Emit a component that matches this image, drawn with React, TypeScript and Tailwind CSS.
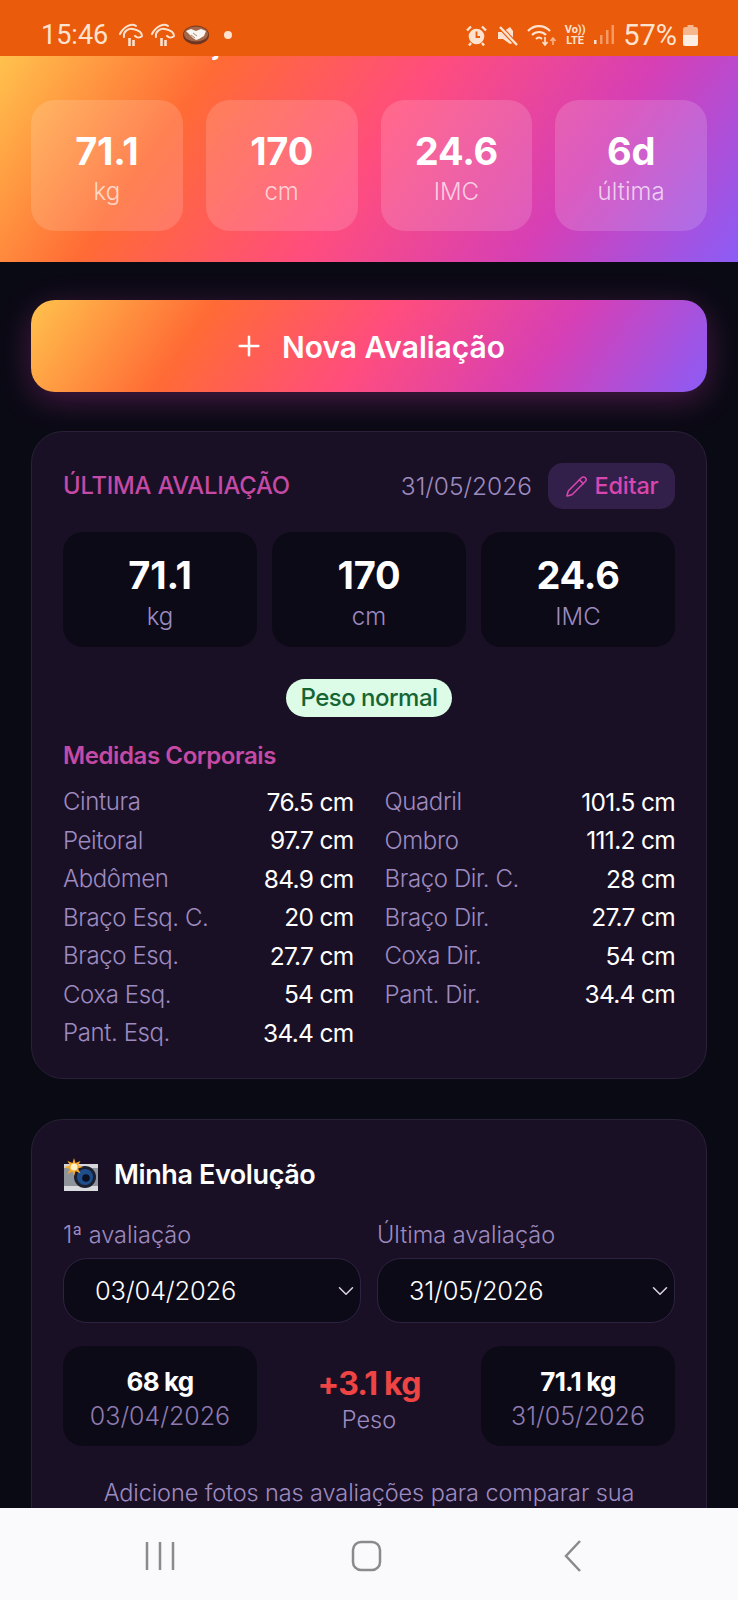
import { ChevronDown, Pencil, Plus } from "lucide-react";

const gradient =
  "bg-[linear-gradient(125deg,#ffc24d_0%,#ff6b35_25%,#ff4d7d_50%,#d63fb5_75%,#8b5cf6_100%)]";

const medidas = [
  ["Cintura", "76.5 cm", "Quadril", "101.5 cm"],
  ["Peitoral", "97.7 cm", "Ombro", "111.2 cm"],
  ["Abdômen", "84.9 cm", "Braço Dir. C.", "28 cm"],
  ["Braço Esq. C.", "20 cm", "Braço Dir.", "27.7 cm"],
  ["Braço Esq.", "27.7 cm", "Coxa Dir.", "54 cm"],
  ["Coxa Esq.", "54 cm", "Pant. Dir.", "34.4 cm"],
  ["Pant. Esq.", "34.4 cm", "", ""],
];

function TreeIcon() {
  return (
    <svg width="26" height="25" viewBox="0 0 26 25" fill="none" stroke="#fde3cf" strokeWidth="2">
      <path d="M2 11 C6 3 14 0 18 3" strokeLinecap="round" />
      <path d="M6 14 C5 8 11 5 15 6 C20 7 24 9 24 13 C22 15 19 15 17 13" strokeLinecap="round" />
      <path d="M11.500 15v8M15.500 17v6" strokeWidth="2.600" />
    </svg>
  );
}

function Handshake() {
  return (
    <svg width="26" height="20" viewBox="0 0 26 20">
      <ellipse cx="13" cy="10" rx="13" ry="9.500" fill="#6f3520" />
      <ellipse cx="13" cy="9" rx="12" ry="7.500" fill="#a3674a" />
      <path d="M3 6l5-2 5 2 5-2 5 2-2 5-5 3-3 1-3-2-3-3z" fill="#f8f4f2" />
      <path d="M10 8l4 3M8 10l4 3" stroke="#a3674a" strokeWidth="0.800" />
    </svg>
  );
}

function AlarmIcon() {
  return (
    <svg width="21" height="21" viewBox="0 0 21 21" fill="none">
      <circle cx="10.500" cy="11.500" r="7.800" fill="#fde3cf" />
      <path d="M10.500 6.500v5.500h3.500" stroke="#ea5b0c" strokeWidth="1.800" />
      <path d="M1 5.500 5 1.500M20 5.500l-4-4M5 18l-2 2.500M16 18l2 2.500" stroke="#fde3cf" strokeWidth="2.400" />
    </svg>
  );
}

function MuteIcon() {
  return (
    <svg width="22" height="21" viewBox="0 0 22 21" fill="none">
      <path d="M1 7h5l7-5 3 4v12l-3 1-7-5H1z" fill="#fde3cf" />
      <path d="M2 1l18 19" stroke="#ea5b0c" strokeWidth="4.500" />
      <path d="M3 2l17 18" stroke="#fde3cf" strokeWidth="2.400" />
    </svg>
  );
}

function WifiIcon() {
  return (
    <svg width="30" height="24" viewBox="0 0 30 24" fill="none" stroke="#fde3cf" strokeWidth="2.100">
      <path d="M1 8c6-6.500 16-6.500 22 0" />
      <path d="M5 12c4-4 10-4 14 0" />
      <path d="M9 16c2-2 4-2 6 0" />
      <path d="M18 14v8M15.500 19l2.500 3 2.500-3" strokeWidth="1.600" />
      <path d="M26 22v-7M23.500 18l2.500-3 2.500 3" strokeWidth="1.600" stroke="#f7b48c" />
    </svg>
  );
}

function SignalIcon() {
  return (
    <svg width="20" height="20" viewBox="0 0 20 20" fill="#f49a64">
      <rect x="0" y="15" width="2.500" height="4" fill="#fde3cf" />
      <rect x="6" y="10" width="2.500" height="9" />
      <rect x="12" y="5" width="2.500" height="14" />
      <rect x="17.500" y="0" width="2.500" height="19" />
    </svg>
  );
}

function BatteryIcon() {
  return (
    <svg width="15" height="21" viewBox="0 0 15 21">
      <rect x="4.500" y="0" width="6" height="3" fill="#f6b78f" />
      <rect x="0" y="2" width="15" height="19" rx="2.500" fill="#f6b78f" />
      <path d="M0 10h15v8.500a2.500 2.500 0 0 1-2.500 2.500h-10A2.500 2.500 0 0 1 0 18.500z" fill="#fdeee3" />
    </svg>
  );
}

function CameraFlash() {
  return (
    <svg width="36" height="34" viewBox="0 0 36 34">
      <rect x="1" y="6" width="34" height="27" rx="1.500" fill="#8f949b" />
      <rect x="1" y="28" width="34" height="5" fill="#d9dbde" />
      <rect x="1" y="6" width="34" height="4" fill="#d5d7da" />
      <circle cx="22" cy="19" r="11" fill="#1a2030" />
      <circle cx="22" cy="19" r="8" fill="#1f4e8c" />
      <circle cx="23" cy="20" r="3.800" fill="#0a1020" />
      <path d="M11 0l1.500 5 5-2-2.500 4.500 5 1.500-5 1.500 2.500 5-5-2.500L11 18l-1.500-4.500L4.500 16 7 11 1 9l6-1.500L4.500 3l5 2z" fill="#f9a825" />
      <circle cx="11" cy="9" r="3.500" fill="#fff3c4" />
    </svg>
  );
}

function Stat({ value, label }: { value: string; label: string }) {
  return (
    <div className="flex h-[131px] flex-col items-center justify-center rounded-[24px] bg-white/15 pt-[4px]">
      <span className="text-[38px] leading-[46px] font-bold tracking-[-0.2px] text-white">{value}</span>
      <span className="mt-[3px] text-[24px] leading-[30px] font-light text-white/70">{label}</span>
    </div>
  );
}

function InnerStat({ value, label }: { value: string; label: string }) {
  return (
    <div className="flex h-[115px] flex-col items-center justify-center rounded-[20px] bg-[#0d0a18] pt-[5px]">
      <span className="text-[38px] leading-[46px] font-bold tracking-[-0.2px] text-white">{value}</span>
      <span className="mt-[4px] text-[24px] leading-[30px] font-light text-[#9d8bc0]">{label}</span>
    </div>
  );
}

function SelectBox({ value }: { value: string }) {
  return (
    <div className="flex h-[65px] items-center justify-between rounded-[24px] border border-[#2d2340] bg-[#0d0a18] pr-[1px] pl-[31px]">
      <span className="pt-[2px] text-[25.5px] font-light tracking-[-0.2px] text-white">{value}</span>
      <ChevronDown size={26} color="#d8d2e4" strokeWidth={1.4} />
    </div>
  );
}

function Compare({ value, date }: { value: string; date: string }) {
  return (
    <div className="flex h-[100px] flex-col items-center justify-center rounded-[20px] bg-[#0d0a18] pt-[6px]">
      <span className="text-[26px] leading-[34px] font-bold tracking-[-0.8px] text-white">{value}</span>
      <span className="text-[25px] leading-[34px] font-light text-[#8d7ab0]">{date}</span>
    </div>
  );
}

export default function App() {
  return (
    <div className="flex h-[1600px] w-[738px] flex-col overflow-hidden bg-[#0a0a14] font-['Inter',sans-serif]">
      {/* barra de status */}
      <div className="flex h-[56px] shrink-0 items-center justify-between bg-[#ea5b0c] pt-[14px] pr-[40px] pl-[41px] font-['Roboto',sans-serif] text-[#fde3cf]">
        <div className="flex items-center">
          <span className="mr-[10px] text-[27px] leading-none">15:46</span>
          <TreeIcon />
          <span className="ml-[6px]"><TreeIcon /></span>
          <span className="ml-[7px]"><Handshake /></span>
          <span className="ml-[15px] h-[8px] w-[8px] rounded-full bg-[#fde3cf]" />
        </div>
        <div className="flex items-center">
          <AlarmIcon />
          <span className="ml-[10px]"><MuteIcon /></span>
          <span className="ml-[8px]"><WifiIcon /></span>
          <div className="ml-[6px] flex w-[24px] flex-col items-center text-[11px] leading-[11px] font-bold">
            <span>Vo))</span>
            <span>LTE</span>
          </div>
          <span className="ml-[7px]"><SignalIcon /></span>
          <span className="ml-[9px] text-[29px] leading-none">57%</span>
          <span className="ml-[6px]"><BatteryIcon /></span>
        </div>
      </div>

      <div className="min-h-0 flex-1 overflow-hidden">
        {/* header */}
        <div className={`${gradient} h-[206px] px-[31px]`}>
          <div className="flex h-[5px] items-end overflow-hidden pl-[182px] text-[26px] leading-[30px] font-bold text-white">
            j
          </div>
          <div className="mt-[39px] grid grid-cols-4 gap-[23px]">
            <Stat value="71.1" label="kg" />
            <Stat value="170" label="cm" />
            <Stat value="24.6" label="IMC" />
            <Stat value="6d" label="última" />
          </div>
        </div>

        <div className="flex flex-col px-[31px] pt-[38px]">
          {/* botão */}
          <div
            className={`${gradient} flex h-[92px] items-center justify-center gap-[17px] rounded-[24px] pt-[3px] text-[30px] font-semibold text-white shadow-[0_8px_32px_rgba(214,63,181,0.3)]`}
          >
            <Plus size={32} strokeWidth={1.9} className="-mt-[3px]" />
            <span>Nova Avaliação</span>
          </div>

          {/* última avaliação */}
          <div className="mt-[39px] h-[648px] rounded-[32px] border border-[#2a2038] bg-[#1a1025] px-[31px]">
            <div className="mt-[31px] flex h-[46px] items-center">
              <span className="text-[23.8px] font-medium tracking-[-0.2px] text-[#c44aa5]">ÚLTIMA AVALIAÇÃO</span>
              <span className="mr-[16px] ml-auto text-[24.5px] font-light text-[#9d8bc0]">31/05/2026</span>
              <div className="flex h-[46px] w-[127px] items-center justify-center gap-[7px] rounded-[15px] bg-[#33204a] text-[23.5px] font-medium tracking-[-0.2px] text-[#d946b0]">
                <Pencil size={23} strokeWidth={1.6} />
                <span>Editar</span>
              </div>
            </div>
            <div className="mt-[23px] grid grid-cols-3 gap-[15px]">
              <InnerStat value="71.1" label="kg" />
              <InnerStat value="170" label="cm" />
              <InnerStat value="24.6" label="IMC" />
            </div>
            <div className="mt-[32px] flex justify-center">
              <span className="flex h-[38px] w-[166px] items-center justify-center rounded-full bg-[#dcfce7] text-[24px] font-medium tracking-[-0.5px] text-[#166534]">
                Peso normal
              </span>
            </div>
            <div className="mt-[24px] text-[24px] leading-[30px] font-semibold tracking-[-0.4px] text-[#c44aa5]">
              Medidas Corporais
            </div>
            <div className="mt-[12px] flex flex-col">
              {medidas.map((m) => (
                <div key={m[0]} className="grid h-[38.500px] grid-cols-2 gap-[31px] tracking-[-0.4px]">
                  <div className="flex items-center justify-between">
                    <span className="text-[24px] font-light text-[#9d8bc0]">{m[0]}</span>
                    <span className="text-[24.5px] tracking-[-0.7px] text-white">{m[1]}</span>
                  </div>
                  <div className="flex items-center justify-between">
                    <span className="text-[24px] font-light text-[#9d8bc0]">{m[2]}</span>
                    <span className="text-[24.5px] tracking-[-0.7px] text-white">{m[3]}</span>
                  </div>
                </div>
              ))}
            </div>
          </div>

          {/* evolução */}
          <div className="mt-[40px] h-[500px] rounded-[32px] border border-[#2a2038] bg-[#1a1025] px-[31px]">
            <div className="mt-[35px] flex h-[40px] items-center gap-[15px]">
              <CameraFlash />
              <span className="text-[27px] font-semibold tracking-[-0.4px] text-white">Minha Evolução</span>
            </div>
            <div className="mt-[25px] grid grid-cols-2 gap-[16px]">
              <div>
                <div className="text-[23.5px] leading-[30px] font-light text-[#9d8bc0]">1ª avaliação</div>
                <div className="mt-[8px]"><SelectBox value="03/04/2026" /></div>
              </div>
              <div>
                <div className="text-[23.5px] leading-[30px] font-light text-[#9d8bc0]">Última avaliação</div>
                <div className="mt-[8px]"><SelectBox value="31/05/2026" /></div>
              </div>
            </div>
            <div className="mt-[23px] grid grid-cols-3 gap-[15px]">
              <Compare value="68 kg" date="03/04/2026" />
              <div className="flex flex-col items-center justify-center pt-[8px]">
                <span className="text-[32px] leading-[40px] font-bold tracking-[-0.8px] text-[#ef4444]">+3.1 kg</span>
                <span className="text-[23.5px] leading-[32px] font-light text-[#9d8bc0]">Peso</span>
              </div>
              <Compare value="71.1 kg" date="31/05/2026" />
            </div>
            <p className="mt-[31px] text-center text-[23.5px] leading-[32px] font-light tracking-[-0.1px] text-[#9d8bc0]">
              Adicione fotos nas avaliações para comparar sua
            </p>
          </div>
        </div>
      </div>

      {/* barra de navegação */}
      <div className="flex h-[92px] shrink-0 items-center justify-between bg-[#fafafc] pt-[3px] pr-[155px] pl-[144px]">
        <svg width="32" height="32" viewBox="0 0 32 32" fill="none" stroke="#8a8a8e" strokeWidth="2.500">
          <path d="M3 2v28M16 2v28M29 2v28" />
        </svg>
        <svg className="mr-[6px]" width="32" height="32" viewBox="0 0 32 32" fill="none" stroke="#8a8a8e" strokeWidth="2.500">
          <rect x="2" y="2" width="27" height="28" rx="8" />
        </svg>
        <svg width="20" height="34" viewBox="0 0 20 34" fill="none" stroke="#8a8a8e" strokeWidth="2.500">
          <path d="M17 2 3 17l14 15" />
        </svg>
      </div>
    </div>
  );
}
